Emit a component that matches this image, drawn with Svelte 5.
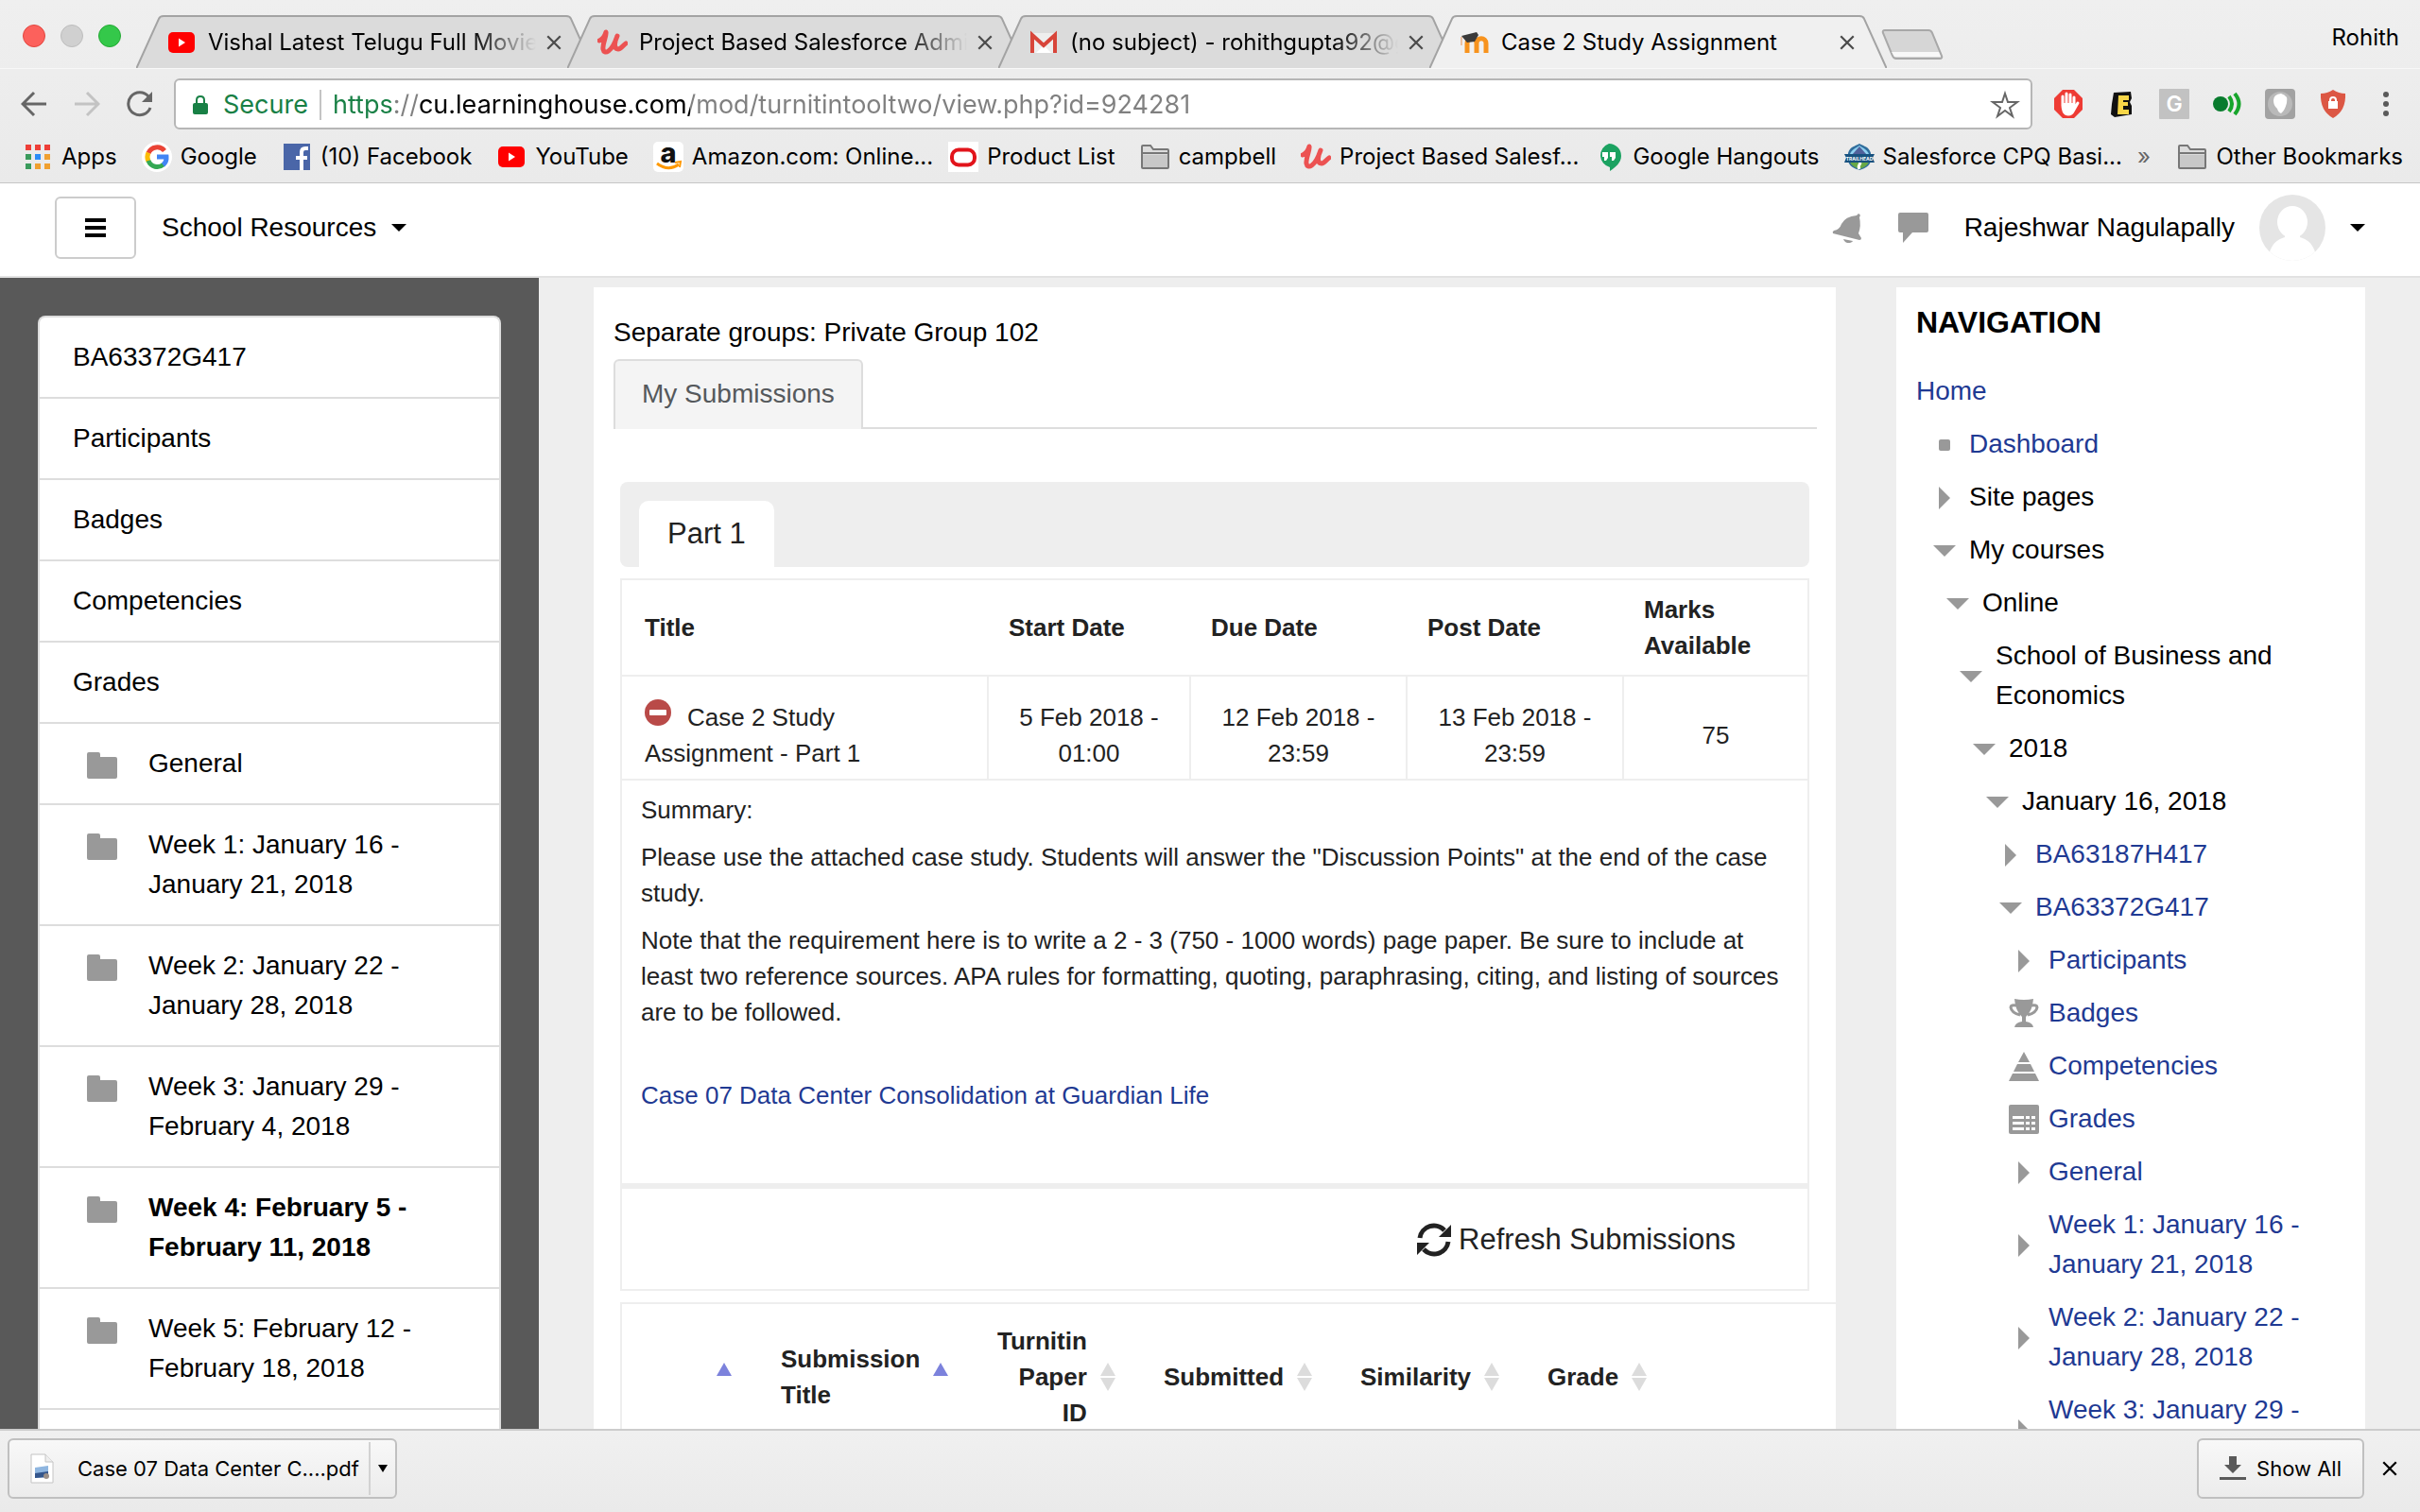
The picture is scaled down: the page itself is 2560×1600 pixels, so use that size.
<script lang="ts">
	const tabs = [
		{ icon: 'youtube', title: 'Vishal Latest Telugu Full Movie 2018', active: false },
		{ icon: 'udemy', title: 'Project Based Salesforce Admin Course', active: false },
		{ icon: 'gmail', title: '(no subject) - rohithgupta92@gmail.com', active: false },
		{ icon: 'moodle', title: 'Case 2 Study Assignment', active: true }
	];

	const bookmarks = [
		{ icon: 'apps', label: 'Apps' },
		{ icon: 'google', label: 'Google' },
		{ icon: 'facebook', label: '(10) Facebook' },
		{ icon: 'youtube', label: 'YouTube' },
		{ icon: 'amazon', label: 'Amazon.com: Online...', clipped: true },
		{ icon: 'oracle', label: 'Product List' },
		{ icon: 'folder', label: 'campbell' },
		{ icon: 'udemy', label: 'Project Based Salesf...', clipped: true },
		{ icon: 'hangouts', label: 'Google Hangouts' },
		{ icon: 'trailhead', label: 'Salesforce CPQ Basi...', clipped: true }
	];

	const extensions = ['adblock', 'ebates', 'grammar', 'signal', 'feather', 'shield'];

	const drawer = [
		{ label: 'BA63372G417' },
		{ label: 'Participants' },
		{ label: 'Badges' },
		{ label: 'Competencies' },
		{ label: 'Grades' },
		{ label: 'General', section: true },
		{ label: 'Week 1: January 16 - January 21, 2018', section: true },
		{ label: 'Week 2: January 22 - January 28, 2018', section: true },
		{ label: 'Week 3: January 29 - February 4, 2018', section: true },
		{ label: 'Week 4: February 5 - February 11, 2018', section: true, current: true },
		{ label: 'Week 5: February 12 - February 18, 2018', section: true }
	];

	const tree = [
		{ level: 1, icon: 'bullet', label: 'Dashboard', link: true },
		{ level: 1, icon: 'right', label: 'Site pages' },
		{ level: 1, icon: 'down', label: 'My courses' },
		{ level: 2, icon: 'down', label: 'Online' },
		{ level: 3, icon: 'down', label: 'School of Business and Economics' },
		{ level: 4, icon: 'down', label: '2018' },
		{ level: 5, icon: 'down', label: 'January 16, 2018' },
		{ level: 6, icon: 'right', label: 'BA63187H417', link: true },
		{ level: 6, icon: 'down', label: 'BA63372G417', link: true },
		{ level: 7, icon: 'right', label: 'Participants', link: true },
		{ level: 7, icon: 'trophy', label: 'Badges', link: true },
		{ level: 7, icon: 'pyramid', label: 'Competencies', link: true },
		{ level: 7, icon: 'grid', label: 'Grades', link: true },
		{ level: 7, icon: 'right', label: 'General', link: true },
		{ level: 7, icon: 'right', label: 'Week 1: January 16 - January 21, 2018', link: true },
		{ level: 7, icon: 'right', label: 'Week 2: January 22 - January 28, 2018', link: true },
		{ level: 7, icon: 'right', label: 'Week 3: January 29 - February 4, 2018', link: true }
	];

	const columns = [
		{ label: '', sort: 'up' },
		{ label: 'Submission Title', sort: 'up' },
		{ label: 'Turnitin Paper ID', sort: 'both', end: true },
		{ label: 'Submitted', sort: 'both' },
		{ label: 'Similarity', sort: 'both' },
		{ label: 'Grade', sort: 'both' },
		{ label: '', sort: '' }
	];

	let url = $state('https://cu.learninghouse.com/mod/turnitintooltwo/view.php?id=924281');
</script>

{#snippet icon(name: string)}
	<svg class="icon" viewBox="0 0 32 32" aria-hidden="true">
		{#if name === 'youtube'}
			<rect x="2" y="5" width="28" height="22" rx="5" fill="#f00" />
			<path d="M13 11.500 20 16l-7 4.500z" fill="#fff" />
		{:else if name === 'udemy'}
			<path
				d="M2 14q5-2 7-9c1 4-4 12-3 18 1 6 9 4 15-14-4 8-3 14 1 14 3 0 5-4 8-6"
				fill="none"
				stroke="#ec5252"
				stroke-width="5"
				stroke-linecap="round"
				stroke-linejoin="round"
			/>
		{:else if name === 'gmail'}
			<path d="M3 6h26v21H3z" fill="#eee" />
			<path d="m8 27 8-8 8 8z" fill="#fff" />
			<path d="M4 27V8l12 11L28 8v19" fill="none" stroke="#d8453a" stroke-width="4" />
		{:else if name === 'moodle'}
			<path
				d="M8 27V17c0-7 10-7 10 0v10M18 27V17c0-7 10-7 10 0v10"
				fill="none"
				stroke="#f7931e"
				stroke-width="5"
			/>
			<path d="m2 9 16-4 2 3-4 7-8 1z" fill="#3a3a3a" />
			<path d="M2 10v9" stroke="#ecc0a0" stroke-width="2" />
		{:else if name === 'apps'}
			{#each ['#ee3f38', '#ee3f38', '#ee3f38', '#3a9b5c', '#2b8cf7', '#f0a030', '#3a9b5c', '#f0a030', '#f0a030'] as fill, i}
				<rect x={3 + (i % 3) * 10} y={3 + Math.floor(i / 3) * 10} width="6" height="6" {fill} />
			{/each}
		{:else if name === 'google'}
			<circle cx="16" cy="16" r="16" fill="#fff" />
			<g fill="none" stroke-width="5">
				<path d="M24 9.500A10 10 0 0 0 7 12" stroke="#ea4335" />
				<path d="M7 11.500a10 10 0 0 0 0 9" stroke="#fbbc05" />
				<path d="M7 20a10 10 0 0 0 16 4" stroke="#34a853" />
				<path d="M22.500 24.500A10 10 0 0 0 26 16H16" stroke="#4285f4" />
			</g>
		{:else if name === 'facebook'}
			<rect x="2" y="2" width="28" height="28" fill="#4a66a8" />
			<path d="M21 30V11q0-4 4-4h3M15 17h12" fill="none" stroke="#fff" stroke-width="4" />
		{:else if name === 'amazon'}
			<rect width="32" height="32" rx="5" fill="#fff" />
			<text x="16" y="22" text-anchor="middle" font-family="Inter, sans-serif" font-size="29" font-weight="800" fill="#111">a</text>
			<path d="M4 23q12 9 23 1" fill="none" stroke="#f90" stroke-width="3" />
			<path d="m23 22 6-1-1 6" fill="none" stroke="#f90" stroke-width="2" />
		{:else if name === 'oracle'}
			<rect width="32" height="32" fill="#fff" />
			<rect x="4" y="8.500" width="24" height="16" rx="7" fill="none" stroke="#e2141b" stroke-width="4" />
		{:else if name === 'folder'}
			<path d="M2 27V5q0-1 1-1h8l3 4h15q1 0 1 1v18q0 1-1 1H3q-1 0-1-1z" fill="#dcdcdc" stroke="#777" stroke-width="2" />
			<path d="M3 14h26v13H3z" fill="#c8c8c8" />
			<path d="M2 12h28" stroke="#777" stroke-width="2" />
		{:else if name === 'hangouts'}
			<path d="M16 2a13 13 0 0 1 13 13c0 7-6 12-12 16v-4A13 13 0 0 1 16 2z" fill="#1ba261" />
			<path d="M9 11h6v6l-2 3h-2v-4H9zm8 0h6v6l-2 3h-2v-4h-2z" fill="#fff" />
		{:else if name === 'trailhead'}
			<path d="M4 12C6 5 11 5 16 2c5 3 10 3 12 10v8c-1 6-6 8-12 10C10 28 5 26 4 20z" fill="#2f6d9c" />
			<path d="M6 13c2-5 6-6 10-9 4 3 8 4 10 9z" fill="#8fd0f0" />
			<path d="m8 14 8-9 8 9z" fill="#50609a" />
			<path d="M6 21h20c-1 4-5 6-10 8-5-2-9-4-10-8z" fill="#68a846" />
			<path d="M16 21c3 3-3 3 0 8" stroke="#fff" stroke-width="3" fill="none" />
			<path d="M0 13h32l-2 4 2 5H0l2-5z" fill="#17517f" />
			<text x="16" y="20" text-anchor="middle" font-family="Inter, sans-serif" font-size="5" font-weight="700" fill="#fff">TRAILHEAD</text>
		{:else if name === 'adblock'}
			<path d="M10 1h12l9 9v12l-9 9H10l-9-9V10z" fill="#ee3b34" />
			<path d="M10 18V8m4 8V5m4 11V6m4 12V9m-12 7c0 9 3 11 6 11 4 0 5-3 6-5l4-7" fill="none" stroke="#fff" stroke-width="3" stroke-linecap="round" />
			<path d="M10 15h12v7l-3 5h-6l-3-5z" fill="#fff" />
		{:else if name === 'ebates'}
			<path d="m8 4 18-1 1 7-2 4 2 4v9L9 30l-4-3 1-11z" fill="#111" />
			<path d="M13 7h11v5h-6v2h5v4h-5v4h6v5H12z" fill="#f8d648" />
		{:else if name === 'grammar'}
			<rect width="32" height="32" rx="1" fill="#c2c2c2" />
			<text x="16" y="24" text-anchor="middle" font-family="Inter, sans-serif" font-size="23" font-weight="600" fill="#fff">G</text>
		{:else if name === 'signal'}
			<circle cx="9" cy="16" r="8" fill="#087b2d" />
			<path d="M18 8q6 8 0 16M24 5q9 11 0 22" fill="none" stroke="#17a52c" stroke-width="4" />
		{:else if name === 'feather'}
			<rect width="32" height="32" rx="4" fill="#a2a2a2" />
			<circle cx="16" cy="16" r="13" fill="#b9b9b9" />
			<path d="M9 12q0-6 8-7 8 2 6 10-2 8-6 11-3-1-4-5-4-3-4-9z" fill="#fff" />
		{:else if name === 'shield'}
			<path d="M16 1q6 4 13 4 1 18-13 26Q2 23 3 5q7 0 13-4z" fill="#dc5744" />
			<rect x="11" y="13" width="10" height="8" fill="#fff" />
			<path d="M13 14v-2q0-3 3-3t3 3v2" fill="none" stroke="#fff" stroke-width="2" />
		{/if}
	</svg>
{/snippet}

{#snippet cross()}
	<svg width="18" height="18" viewBox="0 0 16 16" aria-hidden="true">
		<path d="m2 2 12 12M14 2 2 14" stroke="currentColor" stroke-width="2" />
	</svg>
{/snippet}

{#snippet caret()}
	<svg width="16" height="8" viewBox="0 0 16 8" aria-hidden="true">
		<path d="M0 0h16L8 8z" fill="currentColor" />
	</svg>
{/snippet}

{#snippet treeIcon(name: string)}
	<svg class="icon" viewBox="0 0 32 32" fill="#999" aria-hidden="true">
		{#if name === 'bullet'}
			<rect x="10" y="11" width="12" height="12" rx="2" />
		{:else if name === 'right'}
			<path d="M10 5 22 17 10 29z" />
		{:else if name === 'down'}
			<path d="M4 11h24L16 23z" />
		{:else if name === 'trophy'}
			<path d="M6 1q10 2 20 0-1 13-8 19v5q7 1 8 6H6q1-5 8-6v-5Q7 14 6 1z" />
			<path d="M8 8q-6-1-6 2 1 6 10 8M24 8q6-1 6 2-1 6-10 8" fill="none" stroke="#999" stroke-width="3" />
		{:else if name === 'pyramid'}
			<path d="m16 1 6 11H10zM9 14h14l4 8H5zM4 24h24l4 8H0z" />
		{:else if name === 'grid'}
			<path d="M2 1h28q2 0 2 2v27q0 2-2 2H2q-2 0-2-2V3q0-2 2-2z" />
			<path d="M4 13h12v3H4zm14 0h4v3h-4zm6 0h4v3h-4zM4 19h12v3H4zm14 0h4v3h-4zm6 0h4v3h-4zM4 25h12v3H4zm14 0h4v3h-4zm6 0h4v3h-4z" fill="#fff" />
		{/if}
	</svg>
{/snippet}

<div class="browser">
	<header class="chrome">
		<div class="strip">
			<div class="lights">
				<button class="light close" aria-label="Close window"></button>
				<button class="light minimize" aria-label="Minimize window"></button>
				<button class="light zoom" aria-label="Zoom window"></button>
			</div>

			<div class="tabs">
				{#each tabs as tab}
					<div class="tab" class:active={tab.active}>
						<svg class="tab-shape" viewBox="0 0 484 56" preserveAspectRatio="none" aria-hidden="true">
							<path d="M0 57 24 4q1-3 5-3h426q4 0 5 3l24 53" />
						</svg>
						<div class="tab-body">
							{@render icon(tab.icon)}
							<span class="tab-title">{tab.title}</span>
							<button class="plain" aria-label="Close tab">{@render cross()}</button>
						</div>
					</div>
				{/each}
				<button class="plain new-tab" aria-label="New tab">
					<svg width="66" height="32" viewBox="0 0 66 32">
						<path d="M4 1h46q3 0 4 3l10 24q1 3-2 3H16q-3 0-4-3L2 4q-1-3 2-3z" fill="#d6d6d6" stroke="#a8a8a8" stroke-width="2" />
						<path d="M11 24h50l2 5H14z" fill="#f8f8f8" />
					</svg>
				</button>
			</div>

			<button class="plain profile">Rohith</button>
		</div>

		<div class="toolbar">
			<button class="plain nav-btn" aria-label="Back">
				<svg width="28" height="28" viewBox="0 0 28 28"><path d="M27 14H3M14 2 2 14l12 12" /></svg>
			</button>
			<button class="plain nav-btn forward" aria-label="Forward">
				<svg width="28" height="28" viewBox="0 0 28 28"><path d="M1 14h24M14 2l12 12-12 12" /></svg>
			</button>
			<button class="plain nav-btn" aria-label="Reload">
				<svg width="28" height="28" viewBox="0 0 28 28">
					<path d="M25 18a12 12 0 1 1-2-12" />
					<path d="M27 1v11H16z" fill="#666" stroke="none" />
				</svg>
			</button>
			<div class="address">
				<svg width="18" height="22" viewBox="0 0 18 22" aria-hidden="true">
					<rect x="1" y="9" width="16" height="12" rx="2" fill="#188045" />
					<path d="M5 10V6q0-4 4-4t4 4v4" fill="none" stroke="#188045" stroke-width="2" />
				</svg>
				<span class="secure">Secure</span>
				<input class="url" type="text" aria-label="Address" spellcheck="false" bind:value={url} />
				<button class="plain" aria-label="Bookmark this page">
					<svg width="32" height="32" viewBox="0 0 32 32">
						<path d="m16 4 3 9h10l-8 6 3 9-8-6-8 6 3-9-8-6h10z" fill="none" stroke="#666" stroke-width="2" />
					</svg>
				</button>
			</div>
			<div class="extensions">
				{#each extensions as name}
					<button class="plain" aria-label={name}>{@render icon(name)}</button>
				{/each}
				<button class="plain dots" aria-label="Menu">
					<svg width="8" height="28" viewBox="0 0 8 28" fill="#5a5a5a">
						<circle cx="4" cy="4" r="3" /><circle cx="4" cy="14" r="3" /><circle cx="4" cy="24" r="3" />
					</svg>
				</button>
			</div>
		</div>

		<nav class="bookmarks" aria-label="Bookmarks">
			{#each bookmarks as mark}
				<a href="#{mark.icon}" class:clipped={mark.clipped}>{@render icon(mark.icon)}{mark.label}</a>
			{/each}
			<button class="plain more" aria-label="More bookmarks">»</button>
			<a class="other" href="#other">{@render icon('folder')}Other Bookmarks</a>
		</nav>
	</header>

	<div class="site-header">
		<button class="menu-btn" aria-label="Side panel">
			<svg width="22" height="20" viewBox="0 0 22 20"><path d="M0 2h22M0 10h22M0 18h22" stroke="#000" stroke-width="4" /></svg>
		</button>
		<button class="plain resources">School Resources {@render caret()}</button>
		<div class="user">
			<button class="plain" aria-label="Notifications">
				<svg width="32" height="32" viewBox="0 0 32 32" fill="#999">
					<path d="M28 1q3 1 1 4 2 9-1 17l3 5q0 2-2 2L1 22q-1-2 1-3 6-1 8-7 4-8 16-9z" />
					<path d="M12 28q2 5 7 4 3-1 3-2z" />
				</svg>
			</button>
			<button class="plain" aria-label="Messages">
				<svg width="32" height="32" viewBox="0 0 32 32" fill="#999"><path d="M2 0h28q2 0 2 2v17q0 2-2 2H15L5 32V21H2q-2 0-2-2V2q0-2 2-2z" /></svg>
			</button>
			<button class="plain account">
				<span class="name">Rajeshwar Nagulapally</span>
				<svg width="70" height="70" viewBox="0 0 70 70" aria-hidden="true">
					<clipPath id="avatar"><circle cx="35" cy="35" r="35" /></clipPath>
					<g clip-path="url(#avatar)">
						<path d="M0 0h70v70H0z" fill="#e5e5e5" />
						<ellipse cx="35" cy="29" rx="16" ry="17" fill="#fff" />
						<path d="M27 40h16v5c10 3 16 9 18 25H9c2-16 8-22 18-25z" fill="#fff" />
					</g>
				</svg>
				{@render caret()}
			</button>
		</div>
	</div>

	<div class="page">
		<aside class="drawer">
			<nav class="drawer-list" aria-label="Course">
				{#each drawer as item}
					<a class="drawer-item" class:current={item.current} href="#course">
						{#if item.section}
							<svg class="section-icon" width="32" height="28" viewBox="0 0 32 28" aria-hidden="true">
								<path d="M2 0h10q2 0 2 2v3h16q2 0 2 2v19q0 2-2 2H2q-2 0-2-2V2q0-2 2-2z" fill="#999" />
							</svg>
						{/if}
						<span>{item.label}</span>
					</a>
				{/each}
			</nav>
		</aside>

		<main class="content">
			<div class="groups">Separate groups: Private Group 102</div>
			<div class="nav-tabs">
				<a class="nav-tab" href="#submissions">My Submissions</a>
			</div>

			<section class="inbox">
				<div class="parts">
					<a class="part" href="#part1">Part 1</a>
				</div>

				<table class="details">
					<colgroup>
						<col class="w-title" />
						<col class="w-start" />
						<col class="w-due" />
						<col class="w-due" />
						<col />
					</colgroup>
					<thead>
						<tr>
							<th>Title</th>
							<th>Start Date</th>
							<th>Due Date</th>
							<th>Post Date</th>
							<th>Marks Available</th>
						</tr>
					</thead>
					<tbody>
						<tr class="dates">
							<td class="part-title">
								<svg class="minus" width="28" height="28" viewBox="0 0 28 28" aria-hidden="true">
									<circle cx="14" cy="14" r="14" fill="#b94a48" />
									<rect x="5" y="11" width="18" height="6" rx="1" fill="#fff" />
								</svg>Case 2 Study Assignment - Part 1
							</td>
							<td>5 Feb 2018 - 01:00</td>
							<td>12 Feb 2018 - 23:59</td>
							<td>13 Feb 2018 - 23:59</td>
							<td>75</td>
						</tr>
						<tr>
							<td class="summary" colspan="5">
								<p>Summary:</p>
								<p>
									Please use the attached case study. Students will answer the "Discussion Points" at the
									end of the case study.
								</p>
								<p>
									Note that the requirement here is to write a 2 - 3 (750 - 1000 words) page paper. Be
									sure to include at least two reference sources. APA rules for formatting, quoting,
									paraphrasing, citing, and listing of sources are to be followed.
								</p>
								<p class="attachment"><a href="#case">Case 07 Data Center Consolidation at Guardian Life</a></p>
							</td>
						</tr>
					</tbody>
				</table>

				<div class="refresh">
					<button class="plain">
						<svg width="36" height="36" viewBox="0 0 36 36" aria-hidden="true">
							<g fill="none" stroke="#222" stroke-width="5">
								<path d="M3 16A15 15 0 0 1 29 8" />
								<path d="M33 20A15 15 0 0 1 7 28" />
							</g>
							<path d="M36 2v13H23zM0 34V21h13z" fill="#222" />
						</svg>
						Refresh Submissions
					</button>
				</div>

				<table class="submissions">
					<colgroup>
						<col class="w-select" />
						<col class="w-sub" />
						<col class="w-id" />
						<col class="w-date" />
						<col class="w-sim" />
						<col class="w-grade" />
						<col />
					</colgroup>
					<thead>
						<tr>
							{#each columns as column}
								<th>
									<div class="sortable" class:end={column.end} class:bare={!column.label}>
										{#if column.label}<span>{column.label}</span>{/if}
										{#if column.sort}
											<svg width="24" height="32" viewBox="0 0 24 32" aria-hidden="true">
												{#if column.sort === 'up'}
													<path d="m12 1 8 14H4z" fill="#7c82dc" />
												{:else}
													<path d="m12 1 8 14H4zM12 31l8-14H4z" fill="#dcdcdc" />
												{/if}
											</svg>
										{/if}
									</div>
								</th>
							{/each}
						</tr>
					</thead>
				</table>
			</section>
		</main>

		<aside class="blocks">
			<h2>NAVIGATION</h2>
			<ul>
				<li><a href="#home">Home</a></li>
				{#each tree as node}
					<li style="padding-left: {node.level * 14}px">
						{@render treeIcon(node.icon)}
						{#if node.link}
							<a href="#node">{node.label}</a>
						{:else}
							<span>{node.label}</span>
						{/if}
					</li>
				{/each}
			</ul>
		</aside>
	</div>

	<footer class="downloads">
		<div class="download">
			<button class="plain file">
				<svg width="26" height="32" viewBox="0 0 26 32" aria-hidden="true">
					<path d="M1 1h15l8 8v22H1z" fill="#fff" stroke="#c4c4c4" />
					<path d="M16 1v8h8" fill="#eee" stroke="#c4c4c4" />
					<path d="m5 15 14-2v12l-14 1z" fill="#8fb6e0" />
					<path d="m5 21 14-2v6l-14 1z" fill="#34568c" />
					<circle cx="17" cy="24" r="3" fill="#9a8f88" />
				</svg>
				Case 07 Data Center C....pdf
			</button>
			<button class="plain arrow" aria-label="Download options">
				<svg width="10" height="8" viewBox="0 0 10 8"><path d="M0 0h10L5 8z" /></svg>
			</button>
		</div>
		<button class="show-all">
			<svg width="28" height="26" viewBox="0 0 28 26" aria-hidden="true">
				<path d="M10 0h8v9h5l-9 9-9-9h5zM0 22h28v3H0z" fill="#5a5a5a" />
			</svg>
			Show All
		</button>
		<button class="plain" aria-label="Close downloads bar">{@render cross()}</button>
	</footer>
</div>

<style>
	:global(body) {
		margin: 0;
	}

	.browser {
		display: flex;
		flex-direction: column;
		height: 100vh;
		overflow: hidden;
		font-family: 'Liberation Sans', Arial, sans-serif;
		font-size: 28px;
		line-height: 42px;
		color: #000;
		background: #eee;
	}

	.browser *,
	.browser {
		box-sizing: border-box;
	}

	button {
		font: inherit;
		color: inherit;
		cursor: pointer;
	}

	.plain {
		display: flex;
		align-items: center;
		padding: 0;
		border: 0;
		background: none;
	}

	a {
		color: #1f3a93;
		text-decoration: none;
	}

	svg {
		flex: none;
		display: block;
	}

	.icon {
		width: 32px;
		height: 32px;
	}

	.chrome,
	.downloads {
		flex: none;
		font-family: Inter, Roboto, sans-serif;
		font-size: 24px;
		line-height: 32px;
	}

	.chrome {
		border-bottom: 1px solid #c6c6c6;
		background: linear-gradient(#efefef, #eaeaea);
	}

	.strip {
		display: flex;
		align-items: flex-end;
		height: 73px;
		padding: 0 22px 0 24px;
		border-bottom: 1px solid #f8f8f8;
	}

	.lights {
		display: flex;
		gap: 16px;
		width: 120px;
		padding-bottom: 22px;
	}

	.light {
		width: 24px;
		height: 24px;
		padding: 0;
		border: 1px solid #e2463f;
		border-radius: 50%;
		background: #fc615c;
	}

	.light.minimize {
		border-color: #bdbdbd;
		background: #d0d0d0;
	}

	.light.zoom {
		border-color: #24a934;
		background: #34c84a;
	}

	.tabs {
		display: flex;
		align-items: flex-end;
	}

	.tab {
		display: grid;
		grid-template-columns: minmax(0, 1fr);
		width: 484px;
		height: 56px;
		margin-right: -28px;
	}

	.tab.active {
		z-index: 1;
	}

	.tab-shape,
	.tab-body {
		grid-area: 1 / 1;
	}

	.tab-shape {
		width: 100%;
		height: 56px;
		fill: #dbdbdb;
		stroke: #a3a3a3;
		stroke-width: 2px;
	}

	.tab.active .tab-shape {
		fill: #f0f0f0;
	}

	.tab-body {
		display: flex;
		align-items: center;
		padding: 2px 33px 0 32px;
		color: #4c4c4c;
	}

	.tab-title {
		flex: 1;
		min-width: 0;
		margin: 0 10px 0 12px;
		overflow: hidden;
		color: #000;
		white-space: nowrap;
		mask-image: linear-gradient(90deg, #000 80%, transparent);
	}

	.tab.active .tab-title {
		mask-image: none;
	}

	.new-tab {
		margin: 0 0 9px 22px;
	}

	.profile {
		margin-left: auto;
		padding: 0 0 16px;
	}

	.toolbar {
		display: flex;
		align-items: center;
		gap: 28px;
		height: 73px;
		padding: 0 22px;
	}

	.nav-btn svg {
		fill: none;
		stroke: #666;
		stroke-width: 3px;
	}

	.nav-btn.forward {
		opacity: 0.3;
	}

	.address {
		display: flex;
		flex: 1;
		align-items: center;
		height: 54px;
		padding: 2px 11px 0 17px;
		border: 2px solid #b6b6b6;
		border-radius: 6px;
		background: #fff;
		font-size: 27px;
	}

	.nav-btn + .address {
		margin-left: -6px;
	}

	.secure {
		margin-left: 15px;
		padding-right: 12px;
		border-right: 2px solid #c4c4c4;
		color: #188045;
	}

	.url {
		flex: 1;
		margin-left: 12px;
		padding: 0;
		border: 0;
		outline: 0;
		font: inherit;
		color: transparent;
		background: linear-gradient(
			90deg,
			#188045 66px,
			#808080 66px 92px,
			#000 92px 378px,
			#808080 378px
		);
		background-clip: text;
	}

	.extensions {
		display: flex;
		align-items: center;
		gap: 24px;
		margin-left: -6px;
	}

	.dots {
		margin: 0 10px 0 12px;
	}

	.bookmarks {
		display: flex;
		align-items: center;
		height: 47px;
		padding: 0 18px 8px 24px;
		gap: 26px;
	}

	.bookmarks a {
		display: flex;
		align-items: center;
		gap: 9px;
		color: #000;
		white-space: nowrap;
	}

	.bookmarks .clipped {
		margin-right: -10px;
	}

	.more {
		color: #666;
	}

	.bookmarks .other {
		gap: 9px;
		margin-left: auto;
	}

	.site-header {
		display: flex;
		flex: none;
		align-items: center;
		height: 100px;
		padding: 0 58px 4px;
		border-bottom: 2px solid #e2e2e2;
		background: #fff;
	}

	.menu-btn {
		display: flex;
		align-items: center;
		justify-content: center;
		width: 86px;
		height: 66px;
		margin-right: 27px;
		border: 2px solid #ccc;
		border-radius: 6px;
		background: #fff;
	}

	.resources {
		gap: 16px;
	}

	.user {
		display: flex;
		align-items: center;
		gap: 38px;
		margin-left: auto;
	}

	.account {
		gap: 26px;
	}

	.page {
		display: flex;
		flex: 1;
		align-items: stretch;
		min-height: 0;
		overflow: hidden;
	}

	.drawer {
		flex: none;
		width: 570px;
		padding: 40px 40px 0;
		background: #595959;
	}

	.drawer-list {
		min-height: 100%;
		border: 2px solid #ddd;
		border-bottom: 0;
		border-radius: 8px 8px 0 0;
		background: #fff;
	}

	.drawer-item {
		display: flex;
		align-items: flex-start;
		padding: 21px 35px;
		border-bottom: 2px solid #ddd;
		color: #000;
	}

	.drawer-item.current {
		font-weight: 700;
	}

	.section-icon {
		margin: 9px 33px 0 15px;
	}

	.content {
		flex: 1;
		min-width: 0;
		margin: 10px 64px 0 58px;
		padding: 27px 20px 0 21px;
		overflow: hidden;
		background: #fff;
	}

	.groups {
		padding-bottom: 7px;
	}

	.nav-tabs {
		display: flex;
		border-bottom: 2px solid #ddd;
	}

	.nav-tab {
		margin-bottom: -2px;
		padding: 14px 28px 16px;
		border: 2px solid #ddd;
		border-bottom: 0;
		border-radius: 6px 6px 0 0;
		background: #f4f4f4;
		color: #55595c;
	}

	.inbox {
		margin: 56px 8px 0 7px;
		font-size: 26px;
		line-height: 38px;
		color: #222;
	}

	.parts {
		display: flex;
		padding: 20px 20px 0;
		border-radius: 8px;
		background: #eee;
	}

	.part {
		padding: 16px 30px;
		border-radius: 10px 10px 0 0;
		background: #fff;
		color: #222;
		font-size: 31px;
	}

	table {
		border-collapse: collapse;
		table-layout: fixed;
	}

	th {
		text-align: left;
	}

	.details {
		width: 100%;
		margin-top: 12px;
		border: 2px solid #eee;
	}

	.details th {
		height: 102px;
		padding: 0 22px;
	}

	.details td {
		border: 2px solid #eee;
	}

	.w-title {
		width: 388px;
	}

	.w-start {
		width: 214px;
	}

	.w-due {
		width: 229px;
	}

	.dates td {
		padding: 24px 22px 8px;
		text-align: center;
	}

	.details th:first-child,
	.dates .part-title {
		padding-left: 24px;
		text-align: left;
	}

	.dates .part-title {
		padding-right: 80px;
	}

	.minus {
		display: inline-block;
		margin-right: 17px;
		vertical-align: 0;
	}

	td.summary {
		padding: 12px 20px 62px;
		border-bottom-width: 6px;
	}

	.summary p {
		margin: 0 0 12px;
	}

	.summary .attachment {
		margin-top: 50px;
	}

	.refresh {
		display: flex;
		justify-content: flex-end;
		padding: 35px 76px 33px;
		border: 2px solid #eee;
		border-top: 0;
		font-size: 31px;
	}

	.refresh button {
		gap: 8px;
	}

	.submissions {
		width: calc(100% + 60px);
		margin-top: 12px;
		border: 2px solid #eee;
	}

	.submissions th {
		padding: 20px 0 20px 24px;
	}

	.w-select {
		width: 145px;
	}

	.w-sub {
		width: 229px;
	}

	.w-id {
		width: 176px;
	}

	.w-date {
		width: 208px;
	}

	.w-sim {
		width: 198px;
	}

	.w-grade {
		width: 154px;
	}

	.sortable {
		display: flex;
		align-items: center;
		gap: 10px;
		padding-right: 24px;
	}

	.sortable.end {
		text-align: right;
	}

	.sortable.bare {
		justify-content: flex-end;
	}

	.blocks {
		flex: none;
		width: 496px;
		margin: 10px 58px 0 0;
		padding: 16px 22px 0 21px;
		overflow: hidden;
		background: #fff;
	}

	.blocks h2 {
		margin: 0 0 24px;
		font-size: 32px;
		line-height: 42px;
	}

	.blocks ul {
		margin: 0;
		padding: 0;
		list-style: none;
	}

	.blocks li {
		display: flex;
		align-items: center;
		gap: 10px;
		padding: 7px 0;
	}

	.downloads {
		display: flex;
		align-items: center;
		gap: 18px;
		height: 88px;
		padding: 0 23px 6px 8px;
		border-top: 2px solid #ccc;
		background: linear-gradient(#f0f0f0, #eaeaea);
		font-size: 22px;
	}

	.download,
	.show-all {
		display: flex;
		align-items: center;
		height: 64px;
		border: 2px solid #c0c0c0;
		border-radius: 6px;
		background: linear-gradient(#f8f8f8, #ececec);
	}

	.file {
		gap: 24px;
		padding: 0 10px 0 22px;
	}

	.arrow {
		height: 56px;
		padding: 0 8px;
		border-left: 2px solid #d2d2d2;
	}

	.show-all {
		gap: 11px;
		margin-left: auto;
		padding: 0 22px;
	}
</style>
